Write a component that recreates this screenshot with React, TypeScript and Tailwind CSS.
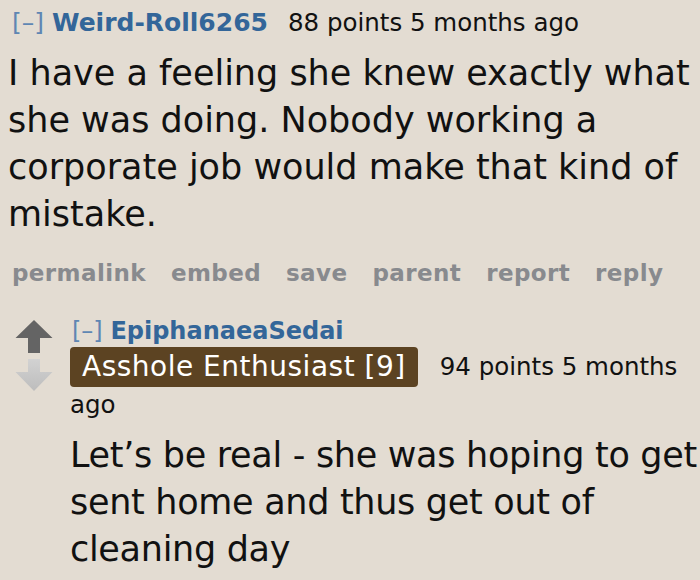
const font = { fontFamily: '"DejaVu Sans", Verdana, sans-serif' };

function UpArrow() {
  return (
    <svg width="38" height="34" viewBox="0 0 38 34">
      <path d="M19 0 L37.5 18 L25 18 L25 33 L13 33 L13 18 L0.5 18 Z" fill="#646464" />
    </svg>
  );
}

function DownArrow() {
  return (
    <svg width="38" height="34" viewBox="0 0 38 34">
      <defs>
        <linearGradient id="dn" x1="0" y1="0" x2="0" y2="1">
          <stop offset="0" stopColor="#d2d2d2" />
          <stop offset="1" stopColor="#bdbdbd" />
        </linearGradient>
      </defs>
      <path d="M13 0 L25 0 L25 13 L37.5 13 L19 32 L0.5 13 L13 13 Z" fill="url(#dn)" />
    </svg>
  );
}

function Actions() {
  return (
    <div className="mt-[18px] flex gap-[25px] pl-[12px] text-[23px] font-bold tracking-[0.4px] text-[#888a8e]">
      <span>permalink</span>
      <span>embed</span>
      <span>save</span>
      <span>parent</span>
      <span>report</span>
      <span>reply</span>
    </div>
  );
}

export default function App() {
  return (
    <div className="h-[580px] w-[700px] overflow-hidden bg-[#e3dcd2]" style={font}>
      <div className="pt-[4px]">
        <div className="flex items-baseline gap-[20px] pl-[12px]">
          <span className="text-[25px] text-[#336699]">
            <span className="font-normal text-[#5f86b3]">[–]</span>{" "}
            <span className="font-bold">Weird-Roll6265</span>
          </span>
          <span className="text-[24.5px] text-[#111]">88 points 5 months ago</span>
        </div>
        <p className="mt-[8px] pl-[8px] text-[35px] leading-[47px] text-[#111]">
          I have a feeling she knew exactly what she was doing. Nobody working a corporate job would make that kind of mistake.
        </p>
        <Actions />
      </div>

      <div className="mt-[27px] flex">
        <div className="flex w-[70px] flex-col items-center pr-[2px] pt-[3px]">
          <UpArrow />
          <div className="mt-[5px]">
            <DownArrow />
          </div>
        </div>
        <div className="flex-1">
          <div className="pl-[2px] text-[24px] leading-[28px] text-[#336699]">
            <span className="font-normal text-[#5f86b3]">[–]</span>{" "}
            <span className="font-bold">EpiphanaeaSedai</span>
          </div>
          <div className="mt-[2px] flex items-center gap-[22px]">
            <span className="rounded-[4px] bg-[#5c4322] px-[12px] text-[28px] leading-[40px] tracking-[0.5px] text-white">
              Asshole Enthusiast [9]
            </span>
            <span className="text-[24.5px] text-[#111]">94 points 5 months</span>
          </div>
          <div className="text-[24.5px] leading-[36px] text-[#111]">ago</div>
          <p className="mt-[9px] text-[35px] leading-[47px] tracking-[-0.3px] text-[#111]">
            Let’s be real - she was hoping to get sent home and thus get out of cleaning day
          </p>
        </div>
      </div>
    </div>
  );
}
